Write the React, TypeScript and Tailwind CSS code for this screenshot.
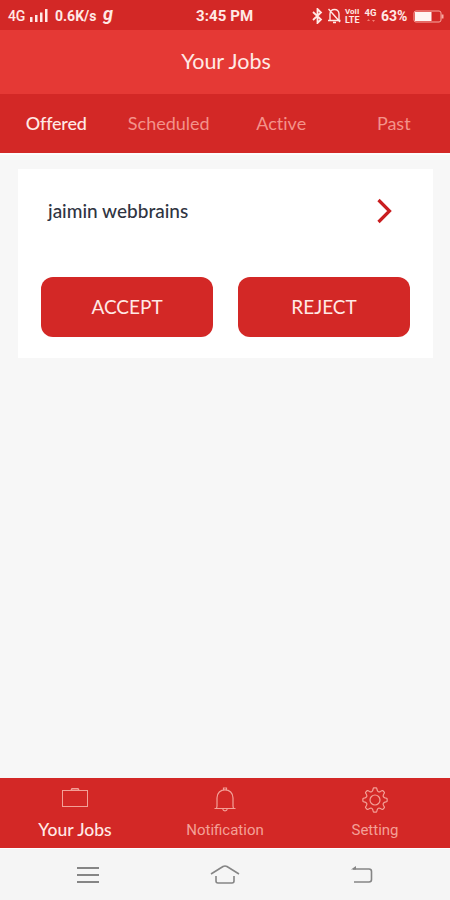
import clsx from "clsx";
import type { ReactNode } from "react";

interface BottomTab {
  label: string;
  icon: ReactNode;
  active?: boolean;
}

const tabs = ["Offered", "Scheduled", "Active", "Past"];

// Outline of a cog with eight rounded teeth, centred on 13,13
const gearPath = (() => {
  const at = (r: number, deg: number) => {
    const a = (deg * Math.PI) / 180;
    return `${(13 + r * Math.cos(a)).toFixed(2)} ${(13 + r * Math.sin(a)).toFixed(2)}`;
  };
  let d = `M${at(12.2, -6)}`;
  for (let i = 0; i < 8; i++) {
    const c = i * 45;
    d += `L${at(12.2, c + 6)}Q${at(12, c + 9)} ${at(10.2, c + 12)}Q${at(7.8, c + 22.5)} ${at(10.2, c + 33)}Q${at(12, c + 36)} ${at(12.2, c + 39)}`;
  }
  return d + "Z";
})();

function BriefcaseIcon() {
  return (
    <svg width="26" height="20" viewBox="0 0 26 20" fill="none" stroke="currentColor">
      <rect x="0.5" y="2.5" width="25" height="16" />
      <path d="M9 2.5 10 .7h6l1 1.8" strokeWidth="1.500" />
    </svg>
  );
}

function BellIcon() {
  return (
    <svg width="24" height="26" viewBox="0 0 24 26" fill="none" stroke="currentColor" strokeWidth="1.200">
      <path d="M1.500 21.500h21M3.500 21.500 4 19v-8C4 6 7.500 2.800 12 2.800S20 6 20 11v8l.5 2.500M10.500 2.800V1h3v1.800M9.800 22c.3 2.600 4.100 2.600 4.400 0" />
    </svg>
  );
}

function GearIcon() {
  return (
    <svg width="26" height="26" viewBox="0 0 26 26" fill="none" stroke="currentColor" strokeWidth="1.200" strokeLinejoin="round">
      <path d={gearPath} />
      <circle cx="13" cy="13" r="5" />
    </svg>
  );
}

const bottomTabs: BottomTab[] = [
  { label: "Your Jobs", icon: <BriefcaseIcon />, active: true },
  { label: "Notification", icon: <BellIcon /> },
  { label: "Setting", icon: <GearIcon /> },
];

function StatusBar() {
  return (
    <div className="flex h-[30px] items-center bg-[#d32826] pt-[2px] font-[Roboto,sans-serif] font-bold text-[#ffe9e5]">
      <div className="flex w-[196px] items-center pl-2">
        <span className="w-[22px] text-[14px] font-medium tracking-[-0.2px]">4G</span>
        <svg width="18" height="14" viewBox="0 0 18 14" fill="currentColor">
          <path d="M0 8h2.500v5H0zM5 6h2.500v7H5zM10 3.500h2.500V13H10zM15 0h2.500v13H15z" />
        </svg>
        <span className="ml-[7px] w-[48px] whitespace-nowrap text-[14px]">0.6K/s</span>
        <span className="-mt-1 text-[18px] leading-none italic">g</span>
      </div>
      <span className="w-[116px] whitespace-nowrap text-[15px] tracking-[0.1px]">3:45 PM</span>
      <svg width="11" height="16" viewBox="0 0 11 16" fill="none" stroke="currentColor" strokeWidth="1.800">
        <path d="m1 4 8 7.500L5.500 15V1L9 4.500 1 12" />
      </svg>
      <svg className="ml-[5px]" width="13" height="16" viewBox="0 0 13 16" fill="none" stroke="currentColor" strokeWidth="1.400">
        <path d="M2 12.500V6c0-6 9-6 9 0v6.500M0 12.500h12.500M5 14.500h3M.5 1l11.500 13" />
      </svg>
      <span className="ml-[4px] flex w-[17px] flex-col">
        <span className="text-[8px] leading-[8px]">VoII</span>
        <span className="text-[9px] leading-[9px]">LTE</span>
      </span>
      <span className="ml-[2px] flex w-[13px] flex-col items-center">
        <span className="text-[9.5px] leading-[9px]">4G</span>
        <svg width="8" height="7" viewBox="0 0 8 7" fill="#f37e75">
          <path d="m0 4 1.500-2L3 4zm5-1h3L6.500 5z" />
        </svg>
      </span>
      <span className="ml-[4px] w-[32px] text-[14px]">63%</span>
      <svg width="32" height="13" viewBox="0 0 32 13" fill="none" stroke="#f8aaa2">
        <rect x="1" y="1" width="27" height="11" rx="2" />
        <path d="M29.500 4.500v4" strokeWidth="2" />
        <rect x="2" y="2" width="16.500" height="9" fill="#fff5f2" stroke="none" />
      </svg>
    </div>
  );
}

function JobCard() {
  return (
    <div className="mx-[18px] mt-[14px] h-[189px] w-[415px] bg-white">
      <div className="flex h-[84px] items-center justify-between pr-[40px] pl-[30px]">
        <span className="text-[19px] font-medium text-[#303442]">jaimin webbrains</span>
        <svg width="16" height="26" viewBox="0 0 16 26" fill="none" stroke="#c91e20" strokeWidth="3.200">
          <path d="m1.500 2 11 11-11 11" />
        </svg>
      </div>
      <div className="mt-[24px] flex gap-[25px] pl-[23px]">
        {["ACCEPT", "REJECT"].map((action) => (
          <button
            key={action}
            className="h-[60px] w-[172px] rounded-[12px] bg-[#d32826] text-[19px] text-[#ffe9e5]"
          >
            {action}
          </button>
        ))}
      </div>
    </div>
  );
}

function SystemNav() {
  return (
    <div className="grid h-[52px] grid-cols-3 items-center justify-items-center border-t border-white bg-[#f5f5f5] px-[19px] text-[#858585]">
      <svg width="22" height="20" viewBox="0 0 22 20" stroke="currentColor" strokeWidth="1.800">
        <path d="M0 3h22M0 10h22M0 17h22" />
      </svg>
      <svg width="30" height="22" viewBox="0 0 30 22" fill="none" stroke="currentColor" strokeWidth="1.600">
        <path d="M1 10 13 2.500q2-1 4 0L29 10M6 12v5q0 2 2 2h14q2 0 2-2v-5" />
      </svg>
      <svg width="22" height="20" viewBox="0 0 22 20" fill="none" stroke="currentColor" strokeWidth="1.600">
        <path d="M2 4h16q2.500 0 2.500 2.500v8q0 2.500-2.500 2.500H3" />
        <path d="M0 4.500 5 1v3.500z" fill="currentColor" stroke="none" />
      </svg>
    </div>
  );
}

export default function App() {
  return (
    <div className="flex h-[900px] w-[450px] flex-col overflow-hidden bg-[#f7f7f7] font-[Lato,sans-serif]">
      <StatusBar />
      <h1 className="flex h-[64px] items-center justify-center bg-[#e53935] pb-px pl-[2px] text-[21.5px] text-[#ffe9e5]">
        Your Jobs
      </h1>
      <div className="grid h-[59px] grid-cols-4 items-center bg-[#d32826] pb-px text-center text-[18px] [font-variant-ligatures:none]">
        {tabs.map((tab, i) => (
          <span
            key={tab}
            className={i === 0 ? "font-medium tracking-[-0.2px] text-[#ffe9e5]" : "text-[#f3938b]"}
          >
            {tab}
          </span>
        ))}
      </div>

      <main className="flex-1 border-t-2 border-white/80">
        <JobCard />
      </main>

      <nav className="grid h-[70px] grid-cols-3 bg-[#d32826]">
        {bottomTabs.map((tab) => (
          <div key={tab.label} className="flex flex-col items-center text-[#f3a097]">
            <div className={clsx("flex h-[42px]", tab.active ? "pt-[10px]" : "pt-[9px]")}>{tab.icon}</div>
            <span
              className={clsx(
                "leading-[20px]",
                tab.active
                  ? "text-[17.5px] font-medium text-[#ffe9e5]"
                  : "font-[Roboto,sans-serif] text-[15px]"
              )}
            >
              {tab.label}
            </span>
          </div>
        ))}
      </nav>
      <SystemNav />
    </div>
  );
}
